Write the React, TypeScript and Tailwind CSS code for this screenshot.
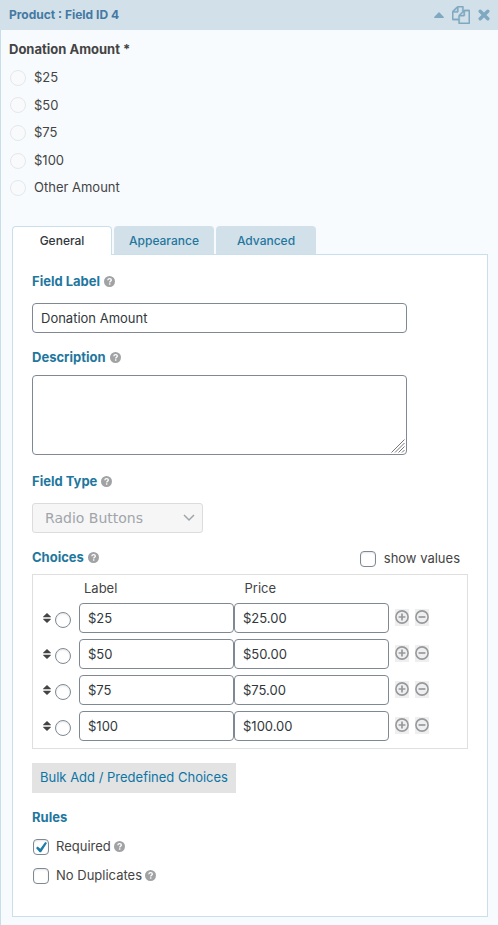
import { useState } from 'react';

const options = ['$25', '$50', '$75', '$100', 'Other Amount'];

const tabs = ['General', 'Appearance', 'Advanced'];

const initialChoices = [
  { label: '$25', price: '$25.00' },
  { label: '$50', price: '$50.00' },
  { label: '$75', price: '$75.00' },
  { label: '$100', price: '$100.00' },
];

const inputClass =
  'h-[30px] min-w-0 rounded border border-[#7e8993] bg-white px-2 text-[13px] text-[#32373c] outline-none';

const CopyIcon = () => (
  <svg viewBox="0 0 1792 1792" className="h-[18px] w-[18px]" fill="currentColor" stroke="currentColor" strokeWidth="40">
    <path d="M1696 384q40 0 68 28t28 68v1216q0 40-28 68t-68 28h-960q-40 0-68-28t-28-68v-288h-544q-40 0-68-28t-28-68v-672q0-40 20-88t48-76l408-408q28-28 76-48t88-20h416q40 0 68 28t28 68v328q68-40 128-40h416zm-544 213l-299 299h299v-299zm-640-384l-299 299h299v-299zm196 647l316-316v-416h-384v416q0 40-28 68t-68 28h-416v640h512v-256q0-40 20-88t48-76zm956 804v-1152h-384v416q0 40-28 68t-68 28h-416v640h896z" />
  </svg>
);

const Help = () => (
  <button type="button" aria-label="Help" className="mb-px text-[#a0a2a4]">
    <svg viewBox="0 0 22 22" className="h-[11px] w-[11px]">
      <circle cx="11" cy="11" r="11" fill="currentColor" />
      <path
        d="M7.6 8.4C7.8 6.2 9.3 5.1 11.2 5.1c2 0 3.5 1.1 3.5 3 0 2.6-3.3 2.5-3.3 5"
        fill="none"
        stroke="#fff"
        strokeWidth="2.6"
      />
      <rect x="9.9" y="14.6" width="2.9" height="2.8" fill="#fff" />
    </svg>
  </button>
);

const SortIcon = () => (
  <svg viewBox="0 0 8 10" className="h-[10px] w-2 shrink-0" fill="#444">
    <path d="M.3 3.600 4 0l3.700 3.600q.5.7-.3.7H.6q-.8 0-.3-.7zM.3 6.400 4 10l3.700-3.600q.5-.7-.3-.7H.6q-.8 0-.3.7z" />
  </svg>
);

const CircleIcon = ({ plus }: { plus?: boolean }) => (
  <svg viewBox="0 0 14 14" className="h-[14px] w-[14px]" fill="none" stroke="#96999c">
    <circle cx="7" cy="7" r="6.1" strokeWidth="1.6" />
    <path d={plus ? 'M3.6 7h6.8M7 3.6v6.8' : 'M3.6 7h6.8'} strokeWidth="1.7" />
  </svg>
);

const Checkbox = ({ id, defaultChecked }: { id: string; defaultChecked?: boolean }) => (
  <span className="relative flex h-4 w-4">
    <input
      id={id}
      type="checkbox"
      defaultChecked={defaultChecked}
      className="peer h-4 w-4 appearance-none rounded border border-[#7e8993] bg-white shadow-[inset_0_1px_2px_rgba(0,0,0,0.1)]"
    />
    <svg
      viewBox="0 0 16 16"
      className="pointer-events-none absolute inset-0 hidden h-4 w-4 peer-checked:block"
      fill="#1e7da8"
    >
      <path d="M12.2 2.9 14 4 8.1 13.2H6.6L3 9l1.7-1.5 2.6 2.2z" />
    </svg>
  </span>
);

const Heading = ({ text, htmlFor }: { text: string; htmlFor: string }) => (
  <div className="flex h-5 items-center gap-1 text-[13px] font-bold text-[#1f779e]">
    <label htmlFor={htmlFor}>{text}</label>
    <Help />
  </div>
);

const App: React.FC = () => {
  const [activeTab, setActiveTab] = useState('General');
  const [choices, setChoices] = useState(initialChoices);

  const addChoice = (index: number) => {
    setChoices([...choices.slice(0, index + 1), { label: '', price: '' }, ...choices.slice(index + 1)]);
  };

  const removeChoice = (index: number) => {
    setChoices(choices.filter((_, i) => i !== index));
  };

  return (
    <div className="border-l border-[#c9dde9] bg-[#f7fbfe] pb-2 font-['Inter','Liberation_Sans',sans-serif] text-[13px] text-[#444]">
      {/* Field header */}
      <header className="-ml-px flex h-[30px] items-center justify-between bg-[#d2e0e9] pr-2 pl-[9px]">
        <h1 className="text-[12px] font-bold text-[#4479a3]">Product : Field ID 4</h1>
        <div className="flex items-center gap-2 text-[#7fa8c1]">
          <button type="button" aria-label="Collapse">
            <svg viewBox="0 0 10 6" className="h-[6px] w-[10px]" fill="currentColor">
              <path d="M5 0 9.8 5q.4.9-.5 1H.7Q-.2 5.900.2 5z" />
            </svg>
          </button>
          <button type="button" aria-label="Duplicate">
            <CopyIcon />
          </button>
          <button type="button" aria-label="Delete">
            <svg viewBox="0 0 12 12" className="h-3 w-3" stroke="currentColor" strokeWidth="3.4" strokeLinecap="round">
              <path d="M2.2 2.2l7.6 7.600M9.800 2.200l-7.600 7.600" />
            </svg>
          </button>
        </div>
      </header>

      {/* Preview */}
      <fieldset className="px-[9px] pt-[10px]">
        <legend className="float-left -ml-px h-6 w-full text-[13px] font-bold">Donation Amount *</legend>
        <div className="clear-both grid h-[138px] grid-rows-5">
          {options.map((option) => (
            <label key={option} className="flex items-center gap-2">
              <input
                type="radio"
                name="preview"
                disabled
                className="h-4 w-4 appearance-none rounded-full border border-[#e5e8ea] bg-[#f8fafb]"
              />
              {option}
            </label>
          ))}
        </div>
      </fieldset>

      {/* Settings */}
      <div className="mt-6 pr-[10px] pl-[11px]">
        <div role="tablist" className="flex gap-[2px]">
          {tabs.map((tab) => (
            <button
              key={tab}
              type="button"
              role="tab"
              aria-selected={activeTab === tab}
              onClick={() => setActiveTab(tab)}
              className={
                activeTab === tab
                  ? 'relative z-10 -mb-px h-[29px] w-[100px] rounded-t border border-b-0 border-[#c9dfeb] bg-white text-[12px] font-medium text-[#32373c]'
                  : 'h-7 w-[100px] rounded-t bg-[#d2e0e9] pt-px text-[12px] font-medium text-[#1f779e]'
              }
            >
              {tab}
            </button>
          ))}
        </div>

        <div className="border border-[#c9dfeb] bg-white px-[19px] pt-[17px] pb-[30px]">
          <Heading text="Field Label" htmlFor="field-label" />
          <input
            id="field-label"
            type="text"
            defaultValue="Donation Amount"
            className={`${inputClass} mt-[11px] block w-[86%]`}
          />

          <div className="mt-[15px]">
            <Heading text="Description" htmlFor="description" />
          </div>
          <div className="relative mt-[7px] w-[86%]">
            <textarea
              id="description"
              className="block h-20 w-full resize-none rounded border border-[#7e8993] bg-white px-2 py-1 outline-none"
            />
            <svg
              viewBox="0 0 14 14"
              className="pointer-events-none absolute right-[2px] bottom-[2px] h-[14px] w-[14px]"
              stroke="#777"
            >
              <path d="M.5 13.500 13.500.5M4 13.500 13.500 4M7.500 13.500l6-6M11 13.500l2.500-2.500" />
            </svg>
          </div>

          <div className="mt-[17px]">
            <Heading text="Field Type" htmlFor="field-type" />
          </div>
          <div className="relative mt-[11px] w-[171px]">
            <select
              id="field-type"
              disabled
              className="block h-[30px] w-full appearance-none rounded-[3px] border border-[#dcdcdc] bg-[#f6f6f6] pl-3 font-['DejaVu_Sans',sans-serif] text-[14px] text-[#a0a5aa] opacity-100"
            >
              <option>Radio Buttons</option>
            </select>
            <svg
              viewBox="0 0 12 8"
              className="pointer-events-none absolute top-[11px] right-2 h-2 w-3"
              fill="none"
              stroke="#a0a5aa"
              strokeWidth="1.5"
            >
              <path d="M1 1l5 5 5-5" />
            </svg>
          </div>

          <div className="mt-[14px] flex items-center justify-between pr-2">
            <Heading text="Choices" htmlFor="choice-0" />
            <label htmlFor="show-values" className="flex items-center gap-2 pt-[2px]">
              <Checkbox id="show-values" />
              show values
            </label>
          </div>

          <div className="mt-[5px] border border-[#dfdfdf] pr-[38px] pb-[7px] pl-[10px]">
            <div className="flex h-7 items-center pr-[24px] pl-[41px]">
              <span className="flex-1">Label</span>
              <span className="flex-1">Price</span>
            </div>
            <div className="flex flex-col gap-[6px]">
              {choices.map((choice, index) => (
                <div key={index} className="flex items-center">
                  <SortIcon />
                  <input
                    type="radio"
                    name="default-choice"
                    aria-label={`Default ${choice.label}`}
                    className="mt-1 mr-2 ml-1 h-4 w-4 shrink-0 appearance-none rounded-full border border-[#7e8993] bg-white shadow-[inset_0_1px_2px_rgba(0,0,0,0.1)] checked:bg-[#1e7da8]"
                  />
                  <input
                    id={`choice-${index}`}
                    type="text"
                    aria-label="Label"
                    defaultValue={choice.label}
                    className={`${inputClass} flex-1`}
                  />
                  <input
                    type="text"
                    aria-label="Price"
                    defaultValue={choice.price}
                    className={`${inputClass} flex-1`}
                  />
                  <div className="mb-px ml-[6px] flex gap-[6px]">
                    <button
                      type="button"
                      aria-label="Add choice"
                      onClick={() => addChoice(index)}
                      className="flex h-[17px] w-[14px] items-center bg-[#efefef]"
                    >
                      <CircleIcon plus />
                    </button>
                    <button
                      type="button"
                      aria-label="Remove choice"
                      onClick={() => removeChoice(index)}
                      className="flex h-[17px] w-[14px] items-center bg-[#efefef]"
                    >
                      <CircleIcon />
                    </button>
                  </div>
                </div>
              ))}
            </div>
          </div>

          <button
            type="button"
            className="mt-[14px] block h-[30px] w-[204px] bg-[#e3e3e3] text-[13px] whitespace-nowrap text-[#0d75a5]"
          >
            Bulk Add / Predefined Choices
          </button>

          <h2 className="mt-[14px] h-5 text-[13px] leading-5 font-bold text-[#1f779e]">Rules</h2>
          <div className="mt-[10px] flex flex-col gap-[9px] pl-px">
            <div className="flex h-5 items-center">
              <Checkbox id="required" defaultChecked />
              <label htmlFor="required" className="mr-[3px] ml-[7px]">
                Required
              </label>
              <Help />
            </div>
            <div className="flex h-5 items-center">
              <Checkbox id="no-duplicates" />
              <label htmlFor="no-duplicates" className="mr-[3px] ml-[7px]">
                No Duplicates
              </label>
              <Help />
            </div>
          </div>
        </div>
      </div>
    </div>
  );
};

export default App;
